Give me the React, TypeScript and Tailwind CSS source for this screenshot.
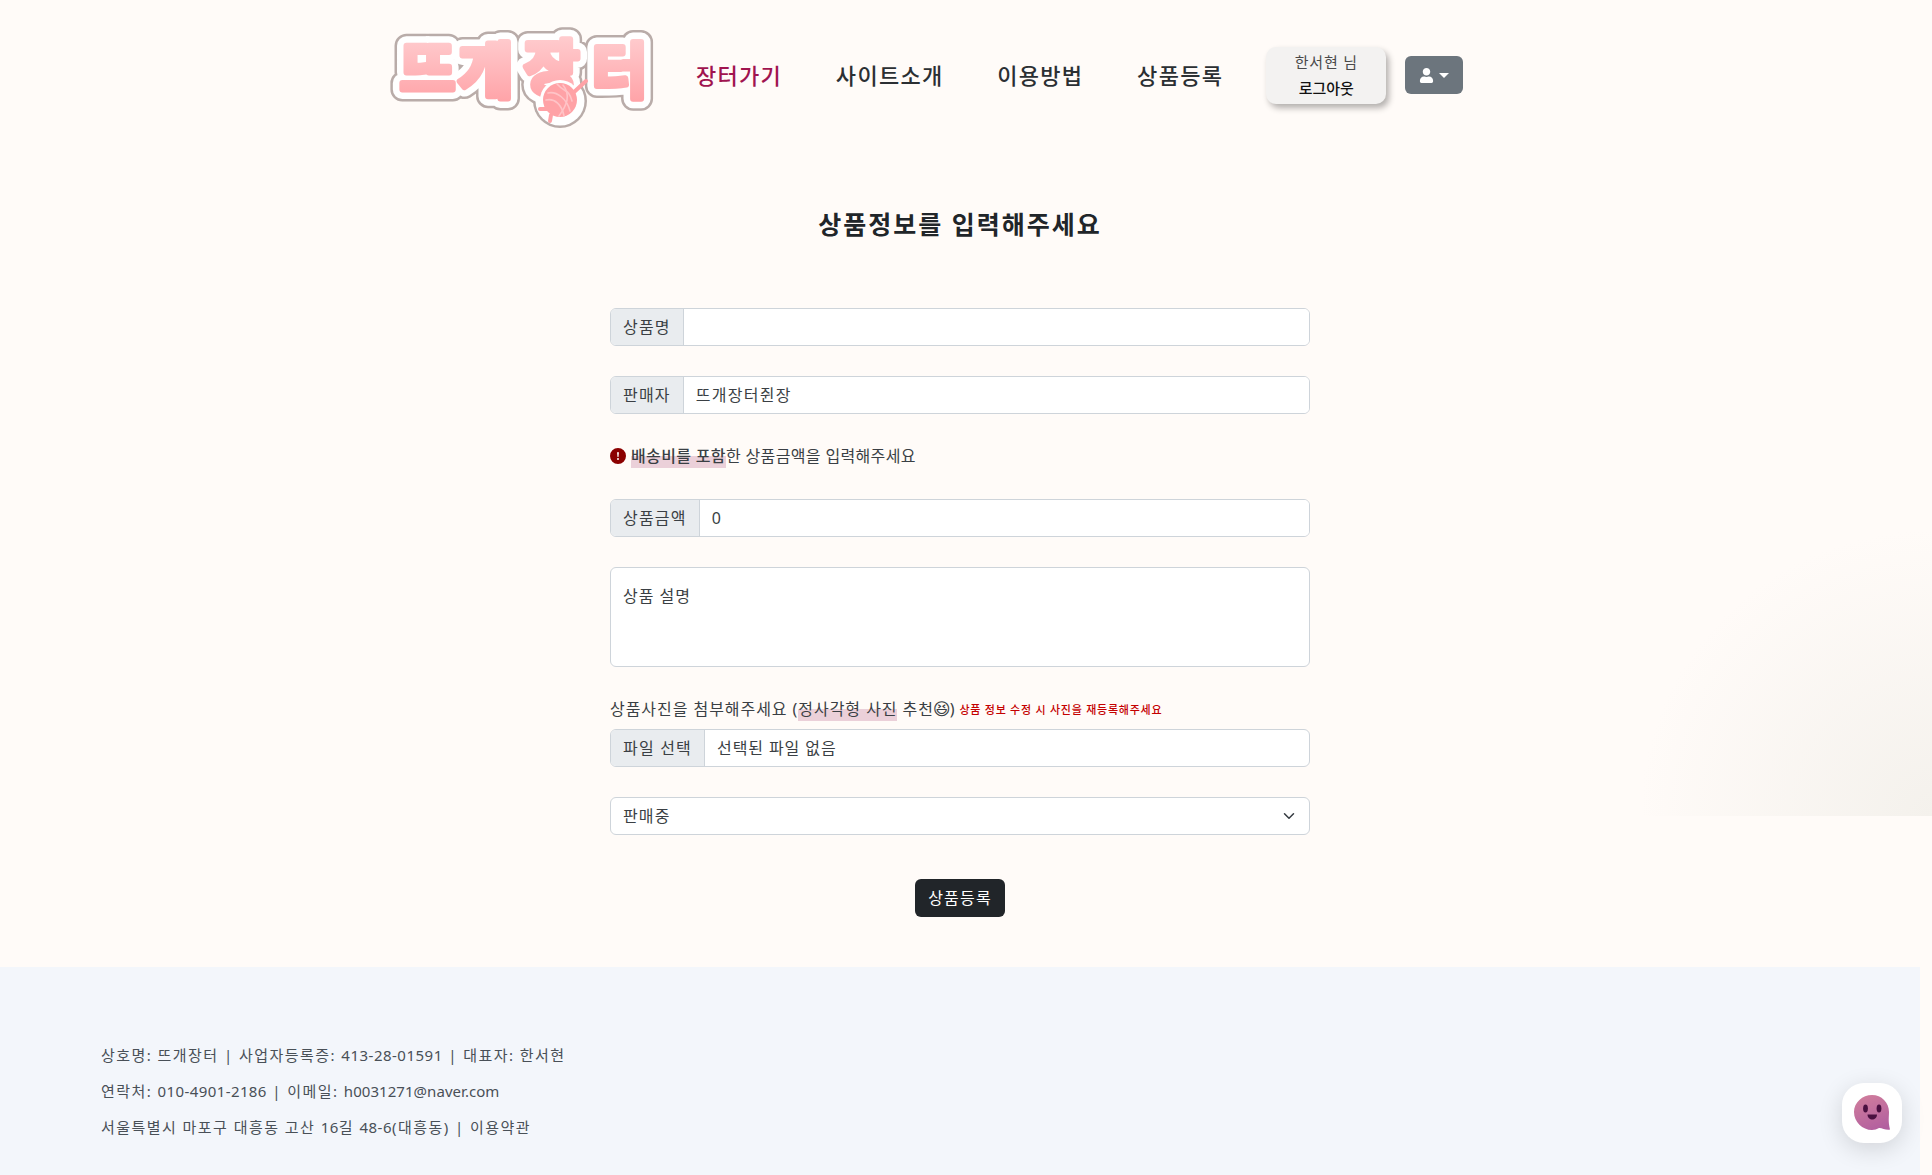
import { BsExclamationCircleFill } from 'react-icons/bs';
import { FaUser } from 'react-icons/fa';
import { LuChevronDown } from 'react-icons/lu';

const FONT = "font-['Noto_Sans','Noto_Sans_CJK_KR',sans-serif]";
const HIGHLIGHT = 'bg-[linear-gradient(transparent_50%,#ebd0d9_50%)]';

const LOGO_X = '15 73 139 207';
const LOGO_Y = '64 66 63 66';

const LogoLetters = (props: React.SVGProps<SVGTextElement>) => (
  <text
    x={LOGO_X}
    y={LOGO_Y}
    fontSize="60"
    fontWeight="700"
    fontFamily="'Noto Sans CJK KR', sans-serif"
    strokeLinejoin="round"
    strokeLinecap="round"
    {...props}
  >
    뜨개장터
  </text>
);

const Logo = () => (
  <svg width="270" height="104" viewBox="0 0 270 104" className="shrink-0 overflow-visible">
    <defs>
      <linearGradient id="logoPink" x1="0" y1="0" x2="0" y2="1">
        <stop offset="0" stopColor="#ffd6d8" />
        <stop offset="1" stopColor="#ff9ea3" />
      </linearGradient>
    </defs>
    <LogoLetters fill="#b9aca9" stroke="#b9aca9" strokeWidth="24" />
    <circle cx="175" cy="74" r="27" fill="#b9aca9" />
    <LogoLetters fill="#fff" stroke="#fff" strokeWidth="19" />
    <circle cx="175" cy="74" r="24.5" fill="#fff" />
    <LogoLetters fill="url(#logoPink)" stroke="url(#logoPink)" strokeWidth="6" />
    <circle cx="175" cy="73" r="20" fill="#fff" />
    <g stroke="#ffa2a6" strokeWidth="4" strokeLinecap="round" fill="none">
      <path d="M188 66 L201 54" />
      <path d="M162 82 L155 82" />
      <path d="M166 88 L165 94" />
    </g>
    <circle cx="175" cy="73" r="17" fill="#ffa2a6" />
    <g stroke="#ffc4c7" strokeWidth="1.6" strokeLinecap="round" fill="none">
      <path d="M163 66 C172 64 182 72 185 84" />
      <path d="M161 73 C170 71 177 78 179 89" />
      <path d="M172 57 C180 66 184 62 187 74" />
      <path d="M178 58 C186 68 182 78 174 89" />
    </g>
  </svg>
);

const NavItem = ({ label, active }: { label: string; active?: boolean }) => (
  <a className={`text-[22px] font-medium tracking-[1.3px] ${active ? 'text-[#a0144f]' : 'text-[#2b2f33]'}`}>{label}</a>
);

const Header = () => (
  <header className="flex items-center pl-[385px] pt-[27px]">
    <Logo />
    <nav className="ml-[41px] flex items-center gap-[53.7px] pb-[8px]">
      <NavItem label="장터가기" active />
      <NavItem label="사이트소개" />
      <NavItem label="이용방법" />
      <NavItem label="상품등록" />
    </nav>
    <div className="ml-[43px] mb-[8px] flex h-[57px] w-[120px] flex-col items-center justify-center rounded-[10px] bg-[#f3f2f1] shadow-[3px_4px_6px_rgba(0,0,0,0.3)]">
      <span className="text-[15px] leading-[26px] tracking-[0.8px] text-[#4a4a4a]">한서현 님</span>
      <span className="text-[15px] leading-[26px] font-medium text-[#111]">로그아웃</span>
    </div>
    <button className="ml-[19px] mb-[8px] flex h-[38px] w-[58px] items-center justify-center gap-[5px] rounded-md bg-[#6c757d] text-white">
      <FaUser size={15} />
      <span className="border-x-[5px] border-t-[5px] border-x-transparent border-t-white" />
    </button>
  </header>
);

const fieldBox = 'flex h-[38px] w-full overflow-hidden rounded-md border border-[#ced4da] bg-white';
const addon = 'flex shrink-0 items-center border-r border-[#ced4da] bg-[#e9ecef] px-3 tracking-[1.2px] text-[#3a3f44]';

const Field = ({ label, value }: { label: string; value?: string }) => (
  <div className={fieldBox}>
    <span className={addon}>{label}</span>
    <input
      readOnly
      value={value ?? ''}
      className="min-w-0 flex-1 bg-white px-3 tracking-[1.3px] text-[#3a3f44] outline-none"
    />
  </div>
);

const Form = () => (
  <form className="ml-[610px] flex w-[700px] flex-col text-base text-[#3a3f44]">
    <Field label="상품명" />
    <div className="mt-[30px]">
      <Field label="판매자" value="뜨개장터쥔장" />
    </div>
    <p className="mt-[30px] flex h-[24px] items-center leading-6 tracking-[0.35px]">
      <BsExclamationCircleFill className="mr-[5px] text-[#8b0000]" size={16} />
      <span className={`font-medium ${HIGHLIGHT}`}>배송비를 포함</span>한 상품금액을 입력해주세요
    </p>
    <div className="mt-[31px]">
      <Field label="상품금액" value="0" />
    </div>
    <textarea
      readOnly
      placeholder="상품 설명"
      className="mt-[30px] h-[100px] w-full resize-none rounded-md border border-[#ced4da] bg-white px-3 py-[16px] tracking-[1px] text-[#3a3f44] outline-none placeholder:text-[#3a3f44]"
    />
    <p className="mt-[30px] flex h-[24px] items-center tracking-[0.95px] whitespace-nowrap">
      상품사진을 첨부해주세요 (<span className={HIGHLIGHT}>정사각형 사진</span>&nbsp;추천
      <span className="-ml-[1px] font-['DejaVu_Sans',sans-serif] text-[17px] leading-none tracking-normal">😆</span>
      <span className="-ml-[1px]">)</span>
      <span className="ml-[4px] pt-[3px] text-[11px] font-medium tracking-[0.75px] text-[#c40000]">상품 정보 수정 시 사진을 재등록해주세요</span>
    </p>
    <div className={`${fieldBox} mt-[8px]`}>
      <span className={addon}>파일 선택</span>
      <span className="flex flex-1 items-center px-3 tracking-[0.9px]">선택된 파일 없음</span>
    </div>
    <div className="relative mt-[30px]">
      <select className="h-[38px] w-full appearance-none rounded-md border border-[#ced4da] bg-white px-3 tracking-[1.1px] text-[#3a3f44] outline-none">
        <option>판매중</option>
      </select>
      <LuChevronDown className="pointer-events-none absolute right-[12px] top-[10px] text-[#343a40]" size={18} />
    </div>
    <button
      type="button"
      className="mx-auto mt-[44px] h-[38px] rounded-md bg-[#212529] px-[13px] tracking-[1.2px] text-white"
    >
      상품등록
    </button>
  </form>
);

const Footer = () => (
  <footer className="mt-[50px] h-[240px] w-[1920px] bg-[#f3f6fb] pl-[101px] pt-[70px] text-[15px] tracking-[1.45px] text-[#495057]">
    <p className="h-9 leading-9">
      상호명: 뜨개장터 | 사업자등록증: <span className="tracking-[0.5px]">413-28-01591</span> | 대표자: 한서현
    </p>
    <p className="h-9 leading-9">
      연락처: <span className="tracking-[0.4px]">010-4901-2186</span> | 이메일:{' '}
      <span className="tracking-[0.05px]">h0031271@naver.com</span>
    </p>
    <p className="h-9 leading-9">
      서울특별시 마포구 대흥동 고산 <span className="tracking-[0.5px]">16</span>길{' '}
      <span className="tracking-[0.5px]">48-6</span>(대흥동) | 이용약관
    </p>
  </footer>
);

const ChatButton = () => (
  <div className="fixed left-[1842px] top-[1083px] flex h-[60px] w-[60px] items-center justify-center rounded-[22px] bg-white shadow-[0_6px_24px_rgba(0,0,0,0.14)]">
    <svg width="38" height="38" viewBox="0 0 38 38">
      <defs>
        <linearGradient id="chatPink" x1="0.3" y1="0" x2="0.7" y2="1">
          <stop offset="0" stopColor="#cf7c9c" />
          <stop offset="1" stopColor="#b25f9f" />
        </linearGradient>
      </defs>
      <path
        d="M19 1 C28.5 1 36 8.5 36 18 C36 23 35 27 37 35.5 C33 36.5 28.5 33.5 26 34 C24 35 21.5 36 19 36 C9.5 36 1 28 1 18 C1 8.5 9.5 1 19 1 Z"
        fill="url(#chatPink)"
      />
      <ellipse cx="12.5" cy="14.5" rx="2.4" ry="4" fill="#4a1040" />
      <ellipse cx="26" cy="14.5" rx="2.4" ry="4" fill="#4a1040" />
      <path d="M14.5 20.5 H24 C24 24 21.5 25.5 19.2 25.5 C17 25.5 14.5 24 14.5 20.5 Z" fill="#4a1040" />
    </svg>
  </div>
);

export default function App() {
  return (
    <div className={`relative h-[1175px] overflow-hidden bg-[#fffbf8] ${FONT}`}>
      {/* soft blob in the right corner, sits over the page background */}
      <div className="pointer-events-none absolute left-[1640px] top-[530px] h-[286px] w-[292px] bg-[radial-gradient(ellipse_100%_100%_at_100%_100%,#f4f1ec_0%,#fffbf8_100%)]" />
      <div className="relative w-[1920px]">
        <Header />
        <h2 className="mt-[74px] text-center text-[25px] leading-[38px] font-bold tracking-[2px] text-[#212529]">
          상품정보를 입력해주세요
        </h2>
        <div className="mt-[65px]">
          <Form />
        </div>
        <Footer />
      </div>
      <ChatButton />
    </div>
  );
}
